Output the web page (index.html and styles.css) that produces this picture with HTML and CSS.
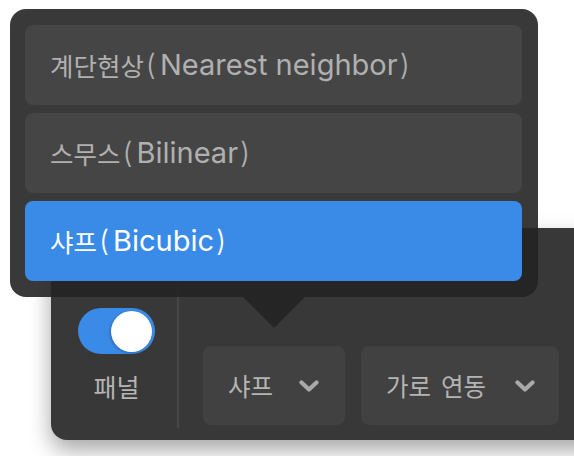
FILE: index.html
```html
<!DOCTYPE html>
<html lang="ko">
<head>
  <meta charset="UTF-8" />
  <title>보간 메뉴</title>
  <link rel="stylesheet" href="styles.css">
</head>
<body>
<div class="stage">
  <!-- toolbar -->
  <div class="toolbar">
    <div class="panel-toggle">
      <div class="switch on"><span class="knob"></span></div>
      <div class="panel-label">패널</div>
    </div>
    <div class="controls">
      <button class="drop drop-mode">샤프
        <svg class="chev" viewBox="0 0 20 12"><polyline points="2.5,2.5 10,9.5 17.5,2.5"/></svg>
      </button>
      <button class="drop drop-link">가로 연동
        <svg class="chev" viewBox="0 0 20 12"><polyline points="2.5,2.5 10,9.5 17.5,2.5"/></svg>
      </button>
    </div>
  </div>

  <!-- popup menu -->
  <div class="menu">
    <div class="item"><span class="ko">계단현상</span><span class="po">(</span>Nearest neighbor<span class="pc">)</span></div>
    <div class="item"><span class="ko">스무스</span><span class="po">(</span>Bilinear<span class="pc">)</span></div>
    <div class="item selected"><span class="ko">샤프</span><span class="po">(</span>Bicubic<span class="pc">)</span></div>
  </div>
</div>
</body>
</html>
```

FILE: styles.css
```css
:root { --blue:#3a8be8; --bar:#383838; --btn:#414141; --txt:#b4b4b4; }
*{box-sizing:border-box}
body{margin:0;background:#fff;font-family:"Noto Sans CJK KR",sans-serif}
.stage{position:relative;width:574px;height:456px;overflow:hidden}

/* toolbar */
.toolbar{display:flex;margin:228px 0 0 51px;width:560px;height:212px;background:var(--bar);border-radius:16px 0 0 16px;box-shadow:0 10px 22px rgba(0,0,0,.35)}
.panel-toggle{display:flex;flex-direction:column;align-items:center;width:128px;padding:80px 22px 0 27px;margin-bottom:12px;border-right:2px solid #464646}
.switch{position:relative;width:77px;height:46px;border-radius:23px;background:var(--blue);flex:none}
.knob{position:absolute;right:3px;top:2.5px;width:41px;height:41px;border-radius:50%;background:#fff;box-shadow:-1px 1px 3px rgba(0,0,0,.25)}
.panel-label{margin-top:16px;font-size:25px;color:var(--txt);line-height:32px}
.controls{display:flex;align-items:flex-end;gap:16px;padding:0 0 15px 24px}
.drop{display:flex;align-items:center;height:79px;padding:0 24px 0 25px;border:none;border-radius:8px;background:var(--btn);color:var(--txt);font:inherit;font-size:24.5px;word-spacing:3px}
.drop-mode{width:142px;gap:26px}
.drop-link{width:198px;justify-content:space-between}
.chev{width:20px;height:12px;fill:none;stroke:#a9a9a9;stroke-width:4.2;stroke-linecap:round;stroke-linejoin:round}

/* popup */
.menu{position:absolute;left:10px;top:9px;width:528px;display:flex;flex-direction:column;gap:8px;padding:15.5px 16px 16px 15px;background:rgba(36,36,36,.9);border-radius:16px}
.menu::after{content:"";position:absolute;top:100%;left:233px;border-left:31px solid transparent;border-right:31px solid transparent;border-top:31px solid rgba(36,36,36,.9)}
.item{height:80px;display:flex;align-items:center;padding-left:25px;background:#454545;border-radius:8px;font-family:Inter,"Noto Sans CJK KR",sans-serif;font-size:29px;color:#b0b0b0}
.item .ko{font-family:"Noto Sans CJK KR",sans-serif;font-size:25.5px}
.item .po{margin:0 4px 0 2px;font-weight:300}
.item .pc{margin-left:2px;font-weight:300}
.item.selected{background:var(--blue);color:#fff}
```
